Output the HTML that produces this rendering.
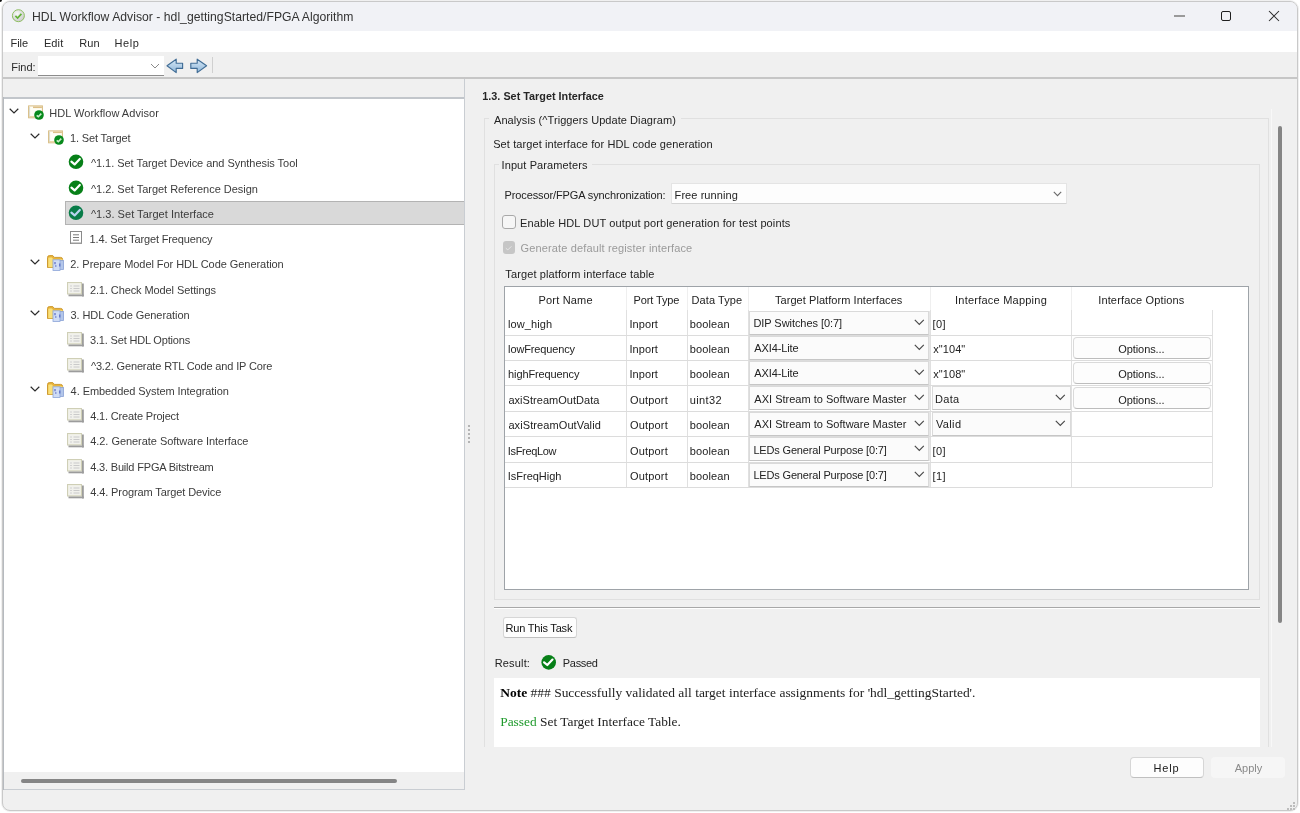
<!DOCTYPE html>
<html><head><meta charset="utf-8"><title>HDL Workflow Advisor</title>
<style>
html,body{margin:0;padding:0;width:1300px;height:813px;overflow:hidden;background:#fff;}
body{position:relative;font-family:'Liberation Sans',sans-serif;}
.t{position:absolute;white-space:nowrap;line-height:14px;font-family:'Liberation Sans',sans-serif;}
svg{overflow:visible}
</style></head><body>
<div style="position:absolute;left:0;top:0;width:1300px;height:813px;will-change:transform">
<div style="position:absolute;box-sizing:border-box;left:2px;top:1px;width:1296px;height:810px;border:1px solid #c9c9c9;border-radius:8px;background:#f0f0f0;overflow:hidden;box-shadow:0 0 0 1px #f0f0f0"></div><div style="position:absolute;box-sizing:border-box;left:3px;top:2px;width:1294px;height:29px;background:#f1f2f6;border-radius:7px 7px 0 0"></div><svg style="position:absolute;left:11px;top:9px" width="15" height="15" viewBox="0 0 15 15"><defs><radialGradient id="gi" cx="40%" cy="35%" r="70%"><stop offset="0" stop-color="#fafafa"/><stop offset="1" stop-color="#c8c8c8"/></radialGradient></defs><circle cx="7.4" cy="6.7" r="6" fill="url(#gi)" stroke="#8fbf62" stroke-width="1"/><path d="M4.4 6.9 L6.6 9 L10.4 4.9" stroke="#62b236" stroke-width="1.7" fill="none"/></svg><div class="t" style="top:10px;font-size:12.2px;color:#333;letter-spacing:0.018px;left:32.00px;">HDL Workflow Advisor - hdl_gettingStarted/FPGA Algorithm</div><div style="position:absolute;box-sizing:border-box;left:1174px;top:15.4px;width:11px;height:1.6px;background:#9a9a9a"></div><div style="position:absolute;box-sizing:border-box;left:1221px;top:11px;width:10px;height:10px;border:1.2px solid #1f1f1f;border-radius:2px"></div><svg style="position:absolute;left:1268px;top:10px" width="12" height="12" viewBox="0 0 12 12"><path d="M1 1 L11 11 M11 1 L1 11" stroke="#2b2b2b" stroke-width="1.05"/></svg><div style="position:absolute;box-sizing:border-box;left:3px;top:31px;width:1294px;height:21px;background:#fff"></div><div class="t" style="top:36px;font-size:11px;color:#2a2a2a;letter-spacing:-0.067px;left:10.60px;">File</div><div class="t" style="top:36px;font-size:11px;color:#2a2a2a;letter-spacing:0.133px;left:43.90px;">Edit</div><div class="t" style="top:36px;font-size:11px;color:#2a2a2a;letter-spacing:0.100px;left:79.30px;">Run</div><div class="t" style="top:36px;font-size:11px;color:#2a2a2a;letter-spacing:0.600px;left:114.40px;">Help</div><div style="position:absolute;box-sizing:border-box;left:3px;top:52px;width:1294px;height:25px;background:#f0f0f0"></div><div class="t" style="top:60px;font-size:11px;color:#2a2a2a;letter-spacing:-0.025px;left:11.20px;">Find:</div><div style="position:absolute;box-sizing:border-box;left:38px;top:56px;width:126px;height:20px;background:#fff;border-bottom:1px solid #8c8c8c"></div><svg style="position:absolute;left:150px;top:63px" width="10" height="6" viewBox="0 0 10 6"><path d="M1 1 L5 5 L9 1" stroke="#8a8a8a" stroke-width="1" fill="none"/></svg><svg style="position:absolute;left:166px;top:58px" width="18" height="16" viewBox="0 0 18 16"><defs><linearGradient id="ag" x1="0" y1="0" x2="0" y2="1"><stop offset="0" stop-color="#d6e8f7"/><stop offset="1" stop-color="#8fb6d8"/></linearGradient></defs><path d="M1 7.8 L10.2 1.2 L10.2 5.2 L16.6 5.2 L16.6 10.4 L10.2 10.4 L10.2 14.6 Z" fill="url(#ag)" stroke="#416d96" stroke-width="1.15" stroke-linejoin="round"/></svg><svg style="position:absolute;left:189px;top:58px" width="19" height="16" viewBox="0 0 19 16"><path d="M17.6 7.8 L8.2 1.2 L8.2 5.2 L1.8 5.2 L1.8 10.4 L8.2 10.4 L8.2 14.6 Z" fill="url(#ag)" stroke="#416d96" stroke-width="1.15" stroke-linejoin="round"/></svg><div style="position:absolute;box-sizing:border-box;left:212px;top:57px;width:1px;height:16px;background:#d0d0d0"></div><div style="position:absolute;box-sizing:border-box;left:3px;top:77px;width:1294px;height:2px;background:#c6c6c6"></div><div style="position:absolute;box-sizing:border-box;left:3px;top:79px;width:462px;height:711px;background:#f0f0f0;border-right:1px solid #c9cdd2;border-bottom:1px solid #c9cdd2"></div><div style="position:absolute;box-sizing:border-box;left:3px;top:97px;width:1px;height:693px;background:#b6babf"></div><div style="position:absolute;box-sizing:border-box;left:4px;top:97px;width:460px;height:2px;background:#c2c6cb"></div><div style="position:absolute;box-sizing:border-box;left:4px;top:99px;width:460px;height:673px;background:#fff"></div><div style="position:absolute;box-sizing:border-box;left:21px;top:779px;width:376px;height:4px;background:#858585;border-radius:2px"></div><svg style="position:absolute;left:9px;top:108px" width="10" height="6" viewBox="0 0 10 6"><path d="M0.7 0.8 L5 5 L9.3 0.8" stroke="#2b2b2b" stroke-width="1.2" fill="none"/></svg><svg style="position:absolute;left:28px;top:105px" width="16" height="16" viewBox="0 0 16 16"><rect x="0.6" y="0.9" width="13.8" height="11.9" fill="#fffef5" stroke="#d7bb80" stroke-width="1"/><path d="M5 2.3 L13.9 2.3" stroke="#dcbf86" stroke-width="1.6"/><path d="M1.6 2 L1.6 12" stroke="#d2d2c4" stroke-width="0.8"/><path d="M1.5 11.7 L8 11.7" stroke="#e8cf98" stroke-width="1"/><circle cx="11" cy="10" r="4.8" fill="#078a1c"/><path d="M8.7 10.3 L10.3 11.7 L13.3 8.6" stroke="#c9ecc9" stroke-width="1.6" fill="none"/></svg><div class="t" style="top:106px;font-size:11px;color:#3c3c3c;letter-spacing:0.042px;left:49.20px;">HDL Workflow Advisor</div><svg style="position:absolute;left:30px;top:133px" width="10" height="6" viewBox="0 0 10 6"><path d="M0.7 0.8 L5 5 L9.3 0.8" stroke="#2b2b2b" stroke-width="1.2" fill="none"/></svg><svg style="position:absolute;left:48px;top:130px" width="16" height="16" viewBox="0 0 16 16"><rect x="0.6" y="0.9" width="13.8" height="11.9" fill="#fffef5" stroke="#d7bb80" stroke-width="1"/><path d="M5 2.3 L13.9 2.3" stroke="#dcbf86" stroke-width="1.6"/><path d="M1.6 2 L1.6 12" stroke="#d2d2c4" stroke-width="0.8"/><path d="M1.5 11.7 L8 11.7" stroke="#e8cf98" stroke-width="1"/><circle cx="11" cy="10" r="4.8" fill="#078a1c"/><path d="M8.7 10.3 L10.3 11.7 L13.3 8.6" stroke="#c9ecc9" stroke-width="1.6" fill="none"/></svg><div class="t" style="top:131px;font-size:11px;color:#3c3c3c;letter-spacing:-0.142px;left:70.00px;">1. Set Target</div><svg style="position:absolute;left:68px;top:154px" width="16" height="16" viewBox="0 0 16 16"><circle cx="8" cy="7.8" r="7.3" fill="#078018"/><path d="M3.4000000000000004 7.7 L6.6 10.4 L11.8 5.0" stroke="#fff" stroke-width="2.2" fill="none" stroke-linecap="round" stroke-linejoin="round"/></svg><div class="t" style="top:156px;font-size:11px;color:#3c3c3c;letter-spacing:-0.039px;left:90.90px;">^1.1. Set Target Device and Synthesis Tool</div><svg style="position:absolute;left:68px;top:180px" width="16" height="16" viewBox="0 0 16 16"><circle cx="8" cy="7.8" r="7.3" fill="#078018"/><path d="M3.4000000000000004 7.7 L6.6 10.4 L11.8 5.0" stroke="#fff" stroke-width="2.2" fill="none" stroke-linecap="round" stroke-linejoin="round"/></svg><div class="t" style="top:182px;font-size:11px;color:#3c3c3c;letter-spacing:-0.016px;left:90.90px;">^1.2. Set Target Reference Design</div><div style="position:absolute;box-sizing:border-box;left:65px;top:201px;width:399px;height:24px;background:#d9d9d9;border:1px solid #b3b3b3;border-right:none"></div><svg style="position:absolute;left:68px;top:205px" width="16" height="16" viewBox="0 0 16 16"><circle cx="8" cy="7.8" r="7.3" fill="#087c48"/><path d="M3.4000000000000004 7.7 L6.6 10.4 L11.8 5.0" stroke="#b8d4f0" stroke-width="2.2" fill="none" stroke-linecap="round" stroke-linejoin="round"/></svg><div class="t" style="top:207px;font-size:11px;color:#3c3c3c;letter-spacing:0.028px;left:90.90px;">^1.3. Set Target Interface</div><svg style="position:absolute;left:70px;top:231px" width="13" height="14" viewBox="0 0 13 14"><rect x="0.5" y="0.5" width="11" height="12" fill="#fff" stroke="#8a8a8a" stroke-width="1"/><rect x="1" y="11.5" width="11" height="1.5" fill="#9a9a9a"/><path d="M3 3.8 h6 M3 6.5 h6 M3 9.2 h6" stroke="#7a7a7a" stroke-width="1"/></svg><div class="t" style="top:232px;font-size:11px;color:#3c3c3c;letter-spacing:-0.142px;left:89.60px;">1.4. Set Target Frequency</div><svg style="position:absolute;left:30px;top:259px" width="10" height="6" viewBox="0 0 10 6"><path d="M0.7 0.8 L5 5 L9.3 0.8" stroke="#2b2b2b" stroke-width="1.2" fill="none"/></svg><svg style="position:absolute;left:47px;top:255px" width="17" height="17" viewBox="0 0 17 17"><path d="M0.5 12.5 L0.5 2.5 Q0.5 0.6 2.4 0.6 L5.8 0.6 L7.4 2.4 L13.6 2.4 Q15.6 2.4 15.6 4.4 L15.6 12.5 Z" fill="#e8b43c" stroke="#c99426" stroke-width="0.9"/><path d="M1.3 12.3 L1.3 3.6 Q1.3 2.6 2.6 2.6 L4.8 2.6 L5.8 3.6 L5.8 12.3 Z" fill="#f9e07a"/><rect x="6" y="4" width="9.4" height="3" fill="#f6d466"/><rect x="11.5" y="5.5" width="5" height="9" fill="#b3c6ea" stroke="#8aa2d6" stroke-width="0.8"/><rect x="6" y="4.8" width="7" height="10.7" fill="#cfdcf4" stroke="#8ca5d9" stroke-width="0.8"/><path d="M8 7 v2.2 M8 11 h1.5 M12.8 8.5 v3" stroke="#4f5fc0" stroke-width="1.1"/></svg><div class="t" style="top:257px;font-size:11px;color:#3c3c3c;letter-spacing:-0.051px;left:70.30px;">2. Prepare Model For HDL Code Generation</div><svg style="position:absolute;left:67px;top:282px" width="17" height="15" viewBox="0 0 17 15"><rect x="0.5" y="0.5" width="14" height="11.5" fill="#ececdf" stroke="#cfcfb6" stroke-width="1"/><rect x="1.5" y="1.5" width="12" height="9.5" fill="#f1f1ec"/><rect x="15" y="1.5" width="1.8" height="13" fill="#9c9c9c"/><rect x="1.5" y="12.5" width="15.3" height="1.8" fill="#9c9c9c"/><path d="M3 4 h2 M3 6.5 h2 M3 9 h2" stroke="#d2d2d2" stroke-width="1.2"/><path d="M6.5 4 h6 M6.5 6.5 h6 M6.5 9 h6" stroke="#cacaca" stroke-width="1.2"/></svg><div class="t" style="top:283px;font-size:11px;color:#3c3c3c;letter-spacing:-0.096px;left:89.90px;">2.1. Check Model Settings</div><svg style="position:absolute;left:30px;top:310px" width="10" height="6" viewBox="0 0 10 6"><path d="M0.7 0.8 L5 5 L9.3 0.8" stroke="#2b2b2b" stroke-width="1.2" fill="none"/></svg><svg style="position:absolute;left:47px;top:306px" width="17" height="17" viewBox="0 0 17 17"><path d="M0.5 12.5 L0.5 2.5 Q0.5 0.6 2.4 0.6 L5.8 0.6 L7.4 2.4 L13.6 2.4 Q15.6 2.4 15.6 4.4 L15.6 12.5 Z" fill="#e8b43c" stroke="#c99426" stroke-width="0.9"/><path d="M1.3 12.3 L1.3 3.6 Q1.3 2.6 2.6 2.6 L4.8 2.6 L5.8 3.6 L5.8 12.3 Z" fill="#f9e07a"/><rect x="6" y="4" width="9.4" height="3" fill="#f6d466"/><rect x="11.5" y="5.5" width="5" height="9" fill="#b3c6ea" stroke="#8aa2d6" stroke-width="0.8"/><rect x="6" y="4.8" width="7" height="10.7" fill="#cfdcf4" stroke="#8ca5d9" stroke-width="0.8"/><path d="M8 7 v2.2 M8 11 h1.5 M12.8 8.5 v3" stroke="#4f5fc0" stroke-width="1.1"/></svg><div class="t" style="top:308px;font-size:11px;color:#3c3c3c;letter-spacing:-0.071px;left:70.40px;">3. HDL Code Generation</div><svg style="position:absolute;left:67px;top:332px" width="17" height="15" viewBox="0 0 17 15"><rect x="0.5" y="0.5" width="14" height="11.5" fill="#ececdf" stroke="#cfcfb6" stroke-width="1"/><rect x="1.5" y="1.5" width="12" height="9.5" fill="#f1f1ec"/><rect x="15" y="1.5" width="1.8" height="13" fill="#9c9c9c"/><rect x="1.5" y="12.5" width="15.3" height="1.8" fill="#9c9c9c"/><path d="M3 4 h2 M3 6.5 h2 M3 9 h2" stroke="#d2d2d2" stroke-width="1.2"/><path d="M6.5 4 h6 M6.5 6.5 h6 M6.5 9 h6" stroke="#cacaca" stroke-width="1.2"/></svg><div class="t" style="top:333px;font-size:11px;color:#3c3c3c;letter-spacing:-0.174px;left:90.00px;">3.1. Set HDL Options</div><svg style="position:absolute;left:67px;top:358px" width="17" height="15" viewBox="0 0 17 15"><rect x="0.5" y="0.5" width="14" height="11.5" fill="#ececdf" stroke="#cfcfb6" stroke-width="1"/><rect x="1.5" y="1.5" width="12" height="9.5" fill="#f1f1ec"/><rect x="15" y="1.5" width="1.8" height="13" fill="#9c9c9c"/><rect x="1.5" y="12.5" width="15.3" height="1.8" fill="#9c9c9c"/><path d="M3 4 h2 M3 6.5 h2 M3 9 h2" stroke="#d2d2d2" stroke-width="1.2"/><path d="M6.5 4 h6 M6.5 6.5 h6 M6.5 9 h6" stroke="#cacaca" stroke-width="1.2"/></svg><div class="t" style="top:359px;font-size:11px;color:#3c3c3c;letter-spacing:-0.150px;left:90.90px;">^3.2. Generate RTL Code and IP Core</div><svg style="position:absolute;left:30px;top:386px" width="10" height="6" viewBox="0 0 10 6"><path d="M0.7 0.8 L5 5 L9.3 0.8" stroke="#2b2b2b" stroke-width="1.2" fill="none"/></svg><svg style="position:absolute;left:47px;top:382px" width="17" height="17" viewBox="0 0 17 17"><path d="M0.5 12.5 L0.5 2.5 Q0.5 0.6 2.4 0.6 L5.8 0.6 L7.4 2.4 L13.6 2.4 Q15.6 2.4 15.6 4.4 L15.6 12.5 Z" fill="#e8b43c" stroke="#c99426" stroke-width="0.9"/><path d="M1.3 12.3 L1.3 3.6 Q1.3 2.6 2.6 2.6 L4.8 2.6 L5.8 3.6 L5.8 12.3 Z" fill="#f9e07a"/><rect x="6" y="4" width="9.4" height="3" fill="#f6d466"/><rect x="11.5" y="5.5" width="5" height="9" fill="#b3c6ea" stroke="#8aa2d6" stroke-width="0.8"/><rect x="6" y="4.8" width="7" height="10.7" fill="#cfdcf4" stroke="#8ca5d9" stroke-width="0.8"/><path d="M8 7 v2.2 M8 11 h1.5 M12.8 8.5 v3" stroke="#4f5fc0" stroke-width="1.1"/></svg><div class="t" style="top:384px;font-size:11px;color:#3c3c3c;letter-spacing:-0.066px;left:70.60px;">4. Embedded System Integration</div><svg style="position:absolute;left:67px;top:408px" width="17" height="15" viewBox="0 0 17 15"><rect x="0.5" y="0.5" width="14" height="11.5" fill="#ececdf" stroke="#cfcfb6" stroke-width="1"/><rect x="1.5" y="1.5" width="12" height="9.5" fill="#f1f1ec"/><rect x="15" y="1.5" width="1.8" height="13" fill="#9c9c9c"/><rect x="1.5" y="12.5" width="15.3" height="1.8" fill="#9c9c9c"/><path d="M3 4 h2 M3 6.5 h2 M3 9 h2" stroke="#d2d2d2" stroke-width="1.2"/><path d="M6.5 4 h6 M6.5 6.5 h6 M6.5 9 h6" stroke="#cacaca" stroke-width="1.2"/></svg><div class="t" style="top:409px;font-size:11px;color:#3c3c3c;letter-spacing:-0.161px;left:90.20px;">4.1. Create Project</div><svg style="position:absolute;left:67px;top:433px" width="17" height="15" viewBox="0 0 17 15"><rect x="0.5" y="0.5" width="14" height="11.5" fill="#ececdf" stroke="#cfcfb6" stroke-width="1"/><rect x="1.5" y="1.5" width="12" height="9.5" fill="#f1f1ec"/><rect x="15" y="1.5" width="1.8" height="13" fill="#9c9c9c"/><rect x="1.5" y="12.5" width="15.3" height="1.8" fill="#9c9c9c"/><path d="M3 4 h2 M3 6.5 h2 M3 9 h2" stroke="#d2d2d2" stroke-width="1.2"/><path d="M6.5 4 h6 M6.5 6.5 h6 M6.5 9 h6" stroke="#cacaca" stroke-width="1.2"/></svg><div class="t" style="top:434px;font-size:11px;color:#3c3c3c;letter-spacing:-0.042px;left:90.20px;">4.2. Generate Software Interface</div><svg style="position:absolute;left:67px;top:459px" width="17" height="15" viewBox="0 0 17 15"><rect x="0.5" y="0.5" width="14" height="11.5" fill="#ececdf" stroke="#cfcfb6" stroke-width="1"/><rect x="1.5" y="1.5" width="12" height="9.5" fill="#f1f1ec"/><rect x="15" y="1.5" width="1.8" height="13" fill="#9c9c9c"/><rect x="1.5" y="12.5" width="15.3" height="1.8" fill="#9c9c9c"/><path d="M3 4 h2 M3 6.5 h2 M3 9 h2" stroke="#d2d2d2" stroke-width="1.2"/><path d="M6.5 4 h6 M6.5 6.5 h6 M6.5 9 h6" stroke="#cacaca" stroke-width="1.2"/></svg><div class="t" style="top:460px;font-size:11px;color:#3c3c3c;letter-spacing:-0.175px;left:90.20px;">4.3. Build FPGA Bitstream</div><svg style="position:absolute;left:67px;top:484px" width="17" height="15" viewBox="0 0 17 15"><rect x="0.5" y="0.5" width="14" height="11.5" fill="#ececdf" stroke="#cfcfb6" stroke-width="1"/><rect x="1.5" y="1.5" width="12" height="9.5" fill="#f1f1ec"/><rect x="15" y="1.5" width="1.8" height="13" fill="#9c9c9c"/><rect x="1.5" y="12.5" width="15.3" height="1.8" fill="#9c9c9c"/><path d="M3 4 h2 M3 6.5 h2 M3 9 h2" stroke="#d2d2d2" stroke-width="1.2"/><path d="M6.5 4 h6 M6.5 6.5 h6 M6.5 9 h6" stroke="#cacaca" stroke-width="1.2"/></svg><div class="t" style="top:485px;font-size:11px;color:#3c3c3c;letter-spacing:-0.100px;left:90.20px;">4.4. Program Target Device</div><div style="position:absolute;box-sizing:border-box;left:468px;top:425.0px;width:2px;height:2px;background:#a0a0a0;border-radius:1px"></div><div style="position:absolute;box-sizing:border-box;left:468px;top:429.1px;width:2px;height:2px;background:#a0a0a0;border-radius:1px"></div><div style="position:absolute;box-sizing:border-box;left:468px;top:433.2px;width:2px;height:2px;background:#a0a0a0;border-radius:1px"></div><div style="position:absolute;box-sizing:border-box;left:468px;top:437.3px;width:2px;height:2px;background:#a0a0a0;border-radius:1px"></div><div style="position:absolute;box-sizing:border-box;left:468px;top:441.4px;width:2px;height:2px;background:#a0a0a0;border-radius:1px"></div><div class="t" style="top:89px;font-size:10.8px;color:#262626;font-weight:bold;letter-spacing:0.017px;left:482.30px;">1.3. Set Target Interface</div><div style="position:absolute;box-sizing:border-box;left:484px;top:118px;width:785px;height:629px;border:1px solid #e0e0e0;border-bottom:none"></div><div style="position:absolute;box-sizing:border-box;left:489px;top:112px;width:192px;height:14px;background:#f0f0f0"></div><div class="t" style="top:113px;font-size:11px;color:#222;letter-spacing:0.065px;left:494.00px;">Analysis (^Triggers Update Diagram)</div><div style="position:absolute;box-sizing:border-box;left:1271px;top:109px;width:1px;height:638px;background:#f8f8f8"></div><div class="t" style="top:137px;font-size:11px;color:#222;letter-spacing:0.093px;left:493.20px;">Set target interface for HDL code generation</div><div style="position:absolute;box-sizing:border-box;left:494px;top:164px;width:766px;height:436px;border:1px solid #e0e0e0"></div><div style="position:absolute;box-sizing:border-box;left:499px;top:158px;width:93px;height:14px;background:#f0f0f0"></div><div class="t" style="top:158px;font-size:11px;color:#222;letter-spacing:0.107px;left:501.50px;">Input Parameters</div><div class="t" style="top:188px;font-size:11px;color:#222;letter-spacing:-0.120px;left:504.60px;">Processor/FPGA synchronization:</div><div style="position:absolute;box-sizing:border-box;left:671px;top:183px;width:396px;height:21px;background:#fdfdfd;border:1px solid #e4e4e4;border-bottom-color:#d4d4d4;border-radius:1px"></div><div class="t" style="top:188px;font-size:11px;color:#222;letter-spacing:0.073px;left:674.60px;">Free running</div><svg style="position:absolute;left:1053px;top:191px" width="9" height="6" viewBox="0 0 9 6"><path d="M0.8 0.8 L4.5 4.6 L8.2 0.8" stroke="#6a6a6a" stroke-width="1.1" fill="none"/></svg><div style="position:absolute;box-sizing:border-box;left:502px;top:215px;width:14px;height:14px;background:#f6f6f6;border:1px solid #a9a9a9;border-radius:3px"></div><div class="t" style="top:216px;font-size:11px;color:#222;letter-spacing:0.117px;left:520.10px;">Enable HDL DUT output port generation for test points</div><div style="position:absolute;box-sizing:border-box;left:502.5px;top:241px;width:12.5px;height:13px;background:#c6c6c6;border-radius:3px"></div><svg style="position:absolute;left:502px;top:241px" width="13" height="13" viewBox="0 0 13 13"><path d="M3.8 7.2 L5.8 8.9 L9.4 5.3" stroke="#e6e6e6" stroke-width="1" fill="none"/></svg><div class="t" style="top:241px;font-size:11px;color:#9a9a9a;letter-spacing:0.141px;left:520.50px;">Generate default register interface</div><div class="t" style="top:267px;font-size:11px;color:#222;letter-spacing:0.117px;left:505.30px;">Target platform interface table</div><div style="position:absolute;box-sizing:border-box;left:504px;top:286px;width:745px;height:304px;background:#fff;border:1px solid #9ea3a8;box-sizing:border-box"></div><div class="t" style="top:293px;font-size:11px;color:#222;letter-spacing:0.188px;left:538.50px;">Port Name</div><div class="t" style="top:293px;font-size:11px;color:#222;letter-spacing:-0.100px;left:633.40px;">Port Type</div><div class="t" style="top:293px;font-size:11px;color:#222;letter-spacing:0.075px;left:691.60px;">Data Type</div><div class="t" style="top:293px;font-size:11px;color:#222;letter-spacing:0.056px;left:775.00px;">Target Platform Interfaces</div><div class="t" style="top:293px;font-size:11px;color:#222;letter-spacing:0.231px;left:955.00px;">Interface Mapping</div><div class="t" style="top:293px;font-size:11px;color:#222;letter-spacing:0.150px;left:1098.20px;">Interface Options</div><div style="position:absolute;box-sizing:border-box;left:626px;top:287px;width:1px;height:23px;background:#efefef"></div><div style="position:absolute;box-sizing:border-box;left:626px;top:310px;width:1px;height:177px;background:#e0e0e0"></div><div style="position:absolute;box-sizing:border-box;left:687px;top:287px;width:1px;height:23px;background:#efefef"></div><div style="position:absolute;box-sizing:border-box;left:687px;top:310px;width:1px;height:177px;background:#e0e0e0"></div><div style="position:absolute;box-sizing:border-box;left:748px;top:287px;width:1px;height:23px;background:#efefef"></div><div style="position:absolute;box-sizing:border-box;left:748px;top:310px;width:1px;height:177px;background:#e0e0e0"></div><div style="position:absolute;box-sizing:border-box;left:930px;top:287px;width:1px;height:23px;background:#efefef"></div><div style="position:absolute;box-sizing:border-box;left:930px;top:310px;width:1px;height:177px;background:#e0e0e0"></div><div style="position:absolute;box-sizing:border-box;left:1071px;top:287px;width:1px;height:23px;background:#efefef"></div><div style="position:absolute;box-sizing:border-box;left:1071px;top:310px;width:1px;height:177px;background:#e0e0e0"></div><div style="position:absolute;box-sizing:border-box;left:1212px;top:310px;width:1px;height:177px;background:#e0e0e0"></div><div style="position:absolute;box-sizing:border-box;left:505px;top:335px;width:707px;height:1px;background:#dcdcdc"></div><div class="t" style="top:317px;font-size:11px;color:#222;letter-spacing:0.071px;left:508.10px;">low_high</div><div class="t" style="top:317px;font-size:11px;color:#222;letter-spacing:0.060px;left:629.50px;">Inport</div><div class="t" style="top:317px;font-size:11px;color:#222;letter-spacing:0.117px;left:689.70px;">boolean</div><div style="position:absolute;box-sizing:border-box;left:749px;top:311px;width:180px;height:24px;background:#fbfbfb;border:1px solid #dadada;border-bottom-color:#c6c6c6"></div><div style="position:absolute;box-sizing:border-box;left:929px;top:311px;width:1px;height:24px;background:#e6e6e6"></div><div class="t" style="top:316px;font-size:11px;color:#222;letter-spacing:-0.059px;left:753.40px;">DIP Switches [0:7]</div><svg style="position:absolute;left:914px;top:319px" width="11" height="7" viewBox="0 0 11 7"><path d="M0.8 0.8 L5.3 5.5 L9.8 0.8" stroke="#4a4a4a" stroke-width="1.15" fill="none"/></svg><div class="t" style="top:317px;font-size:11px;color:#222;letter-spacing:0.400px;left:932.60px;">[0]</div><div style="position:absolute;box-sizing:border-box;left:505px;top:360px;width:707px;height:1px;background:#dcdcdc"></div><div class="t" style="top:342px;font-size:11px;color:#222;letter-spacing:-0.136px;left:508.10px;">lowFrequency</div><div class="t" style="top:342px;font-size:11px;color:#222;letter-spacing:0.060px;left:629.50px;">Inport</div><div class="t" style="top:342px;font-size:11px;color:#222;letter-spacing:0.117px;left:689.70px;">boolean</div><div style="position:absolute;box-sizing:border-box;left:749px;top:336px;width:180px;height:24px;background:#fbfbfb;border:1px solid #dadada;border-bottom-color:#c6c6c6"></div><div style="position:absolute;box-sizing:border-box;left:929px;top:336px;width:1px;height:24px;background:#e6e6e6"></div><div class="t" style="top:341px;font-size:11px;color:#222;letter-spacing:-0.112px;left:754.30px;">AXI4-Lite</div><svg style="position:absolute;left:914px;top:344px" width="11" height="7" viewBox="0 0 11 7"><path d="M0.8 0.8 L5.3 5.5 L9.8 0.8" stroke="#4a4a4a" stroke-width="1.15" fill="none"/></svg><div class="t" style="top:342px;font-size:11px;color:#222;letter-spacing:0.060px;left:933.30px;">x&quot;104&quot;</div><div style="position:absolute;box-sizing:border-box;left:1073px;top:337px;width:138px;height:22px;background:#fdfdfd;border:1px solid #dadada;border-bottom-color:#bdbdbd;border-radius:4px"></div><div class="t" style="top:342px;font-size:11px;color:#222;letter-spacing:-0.089px;left:1118.30px;">Options...</div><div style="position:absolute;box-sizing:border-box;left:505px;top:385px;width:707px;height:1px;background:#dcdcdc"></div><div class="t" style="top:367px;font-size:11px;color:#222;letter-spacing:-0.117px;left:508.10px;">highFrequency</div><div class="t" style="top:367px;font-size:11px;color:#222;letter-spacing:0.060px;left:629.50px;">Inport</div><div class="t" style="top:367px;font-size:11px;color:#222;letter-spacing:0.117px;left:689.70px;">boolean</div><div style="position:absolute;box-sizing:border-box;left:749px;top:361px;width:180px;height:24px;background:#fbfbfb;border:1px solid #dadada;border-bottom-color:#c6c6c6"></div><div style="position:absolute;box-sizing:border-box;left:929px;top:361px;width:1px;height:24px;background:#e6e6e6"></div><div class="t" style="top:366px;font-size:11px;color:#222;letter-spacing:-0.112px;left:754.30px;">AXI4-Lite</div><svg style="position:absolute;left:914px;top:369px" width="11" height="7" viewBox="0 0 11 7"><path d="M0.8 0.8 L5.3 5.5 L9.8 0.8" stroke="#4a4a4a" stroke-width="1.15" fill="none"/></svg><div class="t" style="top:367px;font-size:11px;color:#222;letter-spacing:0.060px;left:933.30px;">x&quot;108&quot;</div><div style="position:absolute;box-sizing:border-box;left:1073px;top:362px;width:138px;height:22px;background:#fdfdfd;border:1px solid #dadada;border-bottom-color:#bdbdbd;border-radius:4px"></div><div class="t" style="top:367px;font-size:11px;color:#222;letter-spacing:-0.089px;left:1118.30px;">Options...</div><div style="position:absolute;box-sizing:border-box;left:505px;top:411px;width:707px;height:1px;background:#dcdcdc"></div><div class="t" style="top:393px;font-size:11px;color:#222;letter-spacing:0.040px;left:508.40px;">axiStreamOutData</div><div class="t" style="top:393px;font-size:11px;color:#222;letter-spacing:0.167px;left:630.00px;">Outport</div><div class="t" style="top:393px;font-size:11px;color:#222;letter-spacing:0.380px;left:689.70px;">uint32</div><div style="position:absolute;box-sizing:border-box;left:749px;top:386px;width:180px;height:24px;background:#fbfbfb;border:1px solid #dadada;border-bottom-color:#c6c6c6"></div><div style="position:absolute;box-sizing:border-box;left:929px;top:386px;width:1px;height:24px;background:#e6e6e6"></div><div class="t" style="top:392px;font-size:11px;color:#222;letter-spacing:0.014px;left:754.30px;">AXI Stream to Software Master</div><svg style="position:absolute;left:914px;top:394px" width="11" height="7" viewBox="0 0 11 7"><path d="M0.8 0.8 L5.3 5.5 L9.8 0.8" stroke="#4a4a4a" stroke-width="1.15" fill="none"/></svg><div style="position:absolute;box-sizing:border-box;left:932px;top:386px;width:139px;height:24px;background:#fbfbfb;border:1px solid #dadada;border-bottom-color:#c6c6c6"></div><div class="t" style="top:392px;font-size:11px;color:#222;letter-spacing:0.300px;left:935.10px;">Data</div><svg style="position:absolute;left:1055px;top:394px" width="11" height="7" viewBox="0 0 11 7"><path d="M0.8 0.8 L5.3 5.5 L9.8 0.8" stroke="#4a4a4a" stroke-width="1.15" fill="none"/></svg><div style="position:absolute;box-sizing:border-box;left:1073px;top:387px;width:138px;height:22px;background:#fdfdfd;border:1px solid #dadada;border-bottom-color:#bdbdbd;border-radius:4px"></div><div class="t" style="top:393px;font-size:11px;color:#222;letter-spacing:-0.089px;left:1118.30px;">Options...</div><div style="position:absolute;box-sizing:border-box;left:505px;top:436px;width:707px;height:1px;background:#dcdcdc"></div><div class="t" style="top:418px;font-size:11px;color:#222;letter-spacing:0.094px;left:508.40px;">axiStreamOutValid</div><div class="t" style="top:418px;font-size:11px;color:#222;letter-spacing:0.167px;left:630.00px;">Outport</div><div class="t" style="top:418px;font-size:11px;color:#222;letter-spacing:0.117px;left:689.70px;">boolean</div><div style="position:absolute;box-sizing:border-box;left:749px;top:412px;width:180px;height:24px;background:#fbfbfb;border:1px solid #dadada;border-bottom-color:#c6c6c6"></div><div style="position:absolute;box-sizing:border-box;left:929px;top:412px;width:1px;height:24px;background:#e6e6e6"></div><div class="t" style="top:417px;font-size:11px;color:#222;letter-spacing:0.014px;left:754.30px;">AXI Stream to Software Master</div><svg style="position:absolute;left:914px;top:420px" width="11" height="7" viewBox="0 0 11 7"><path d="M0.8 0.8 L5.3 5.5 L9.8 0.8" stroke="#4a4a4a" stroke-width="1.15" fill="none"/></svg><div style="position:absolute;box-sizing:border-box;left:932px;top:412px;width:139px;height:24px;background:#fbfbfb;border:1px solid #dadada;border-bottom-color:#c6c6c6"></div><div class="t" style="top:417px;font-size:11px;color:#222;letter-spacing:0.375px;left:935.90px;">Valid</div><svg style="position:absolute;left:1055px;top:420px" width="11" height="7" viewBox="0 0 11 7"><path d="M0.8 0.8 L5.3 5.5 L9.8 0.8" stroke="#4a4a4a" stroke-width="1.15" fill="none"/></svg><div style="position:absolute;box-sizing:border-box;left:505px;top:462px;width:707px;height:1px;background:#dcdcdc"></div><div class="t" style="top:444px;font-size:11px;color:#222;letter-spacing:-0.325px;left:507.80px;">IsFreqLow</div><div class="t" style="top:444px;font-size:11px;color:#222;letter-spacing:0.167px;left:630.00px;">Outport</div><div class="t" style="top:444px;font-size:11px;color:#222;letter-spacing:0.117px;left:689.70px;">boolean</div><div style="position:absolute;box-sizing:border-box;left:749px;top:437px;width:180px;height:24px;background:#fbfbfb;border:1px solid #dadada;border-bottom-color:#c6c6c6"></div><div style="position:absolute;box-sizing:border-box;left:929px;top:437px;width:1px;height:24px;background:#e6e6e6"></div><div class="t" style="top:443px;font-size:11px;color:#222;letter-spacing:-0.164px;left:753.40px;">LEDs General Purpose [0:7]</div><svg style="position:absolute;left:914px;top:445px" width="11" height="7" viewBox="0 0 11 7"><path d="M0.8 0.8 L5.3 5.5 L9.8 0.8" stroke="#4a4a4a" stroke-width="1.15" fill="none"/></svg><div class="t" style="top:444px;font-size:11px;color:#222;letter-spacing:0.400px;left:932.60px;">[0]</div><div style="position:absolute;box-sizing:border-box;left:505px;top:487px;width:707px;height:1px;background:#dcdcdc"></div><div class="t" style="top:469px;font-size:11px;color:#222;letter-spacing:-0.022px;left:507.80px;">IsFreqHigh</div><div class="t" style="top:469px;font-size:11px;color:#222;letter-spacing:0.167px;left:630.00px;">Outport</div><div class="t" style="top:469px;font-size:11px;color:#222;letter-spacing:0.117px;left:689.70px;">boolean</div><div style="position:absolute;box-sizing:border-box;left:749px;top:463px;width:180px;height:24px;background:#fbfbfb;border:1px solid #dadada;border-bottom-color:#c6c6c6"></div><div style="position:absolute;box-sizing:border-box;left:929px;top:463px;width:1px;height:24px;background:#e6e6e6"></div><div class="t" style="top:468px;font-size:11px;color:#222;letter-spacing:-0.164px;left:753.40px;">LEDs General Purpose [0:7]</div><svg style="position:absolute;left:914px;top:471px" width="11" height="7" viewBox="0 0 11 7"><path d="M0.8 0.8 L5.3 5.5 L9.8 0.8" stroke="#4a4a4a" stroke-width="1.15" fill="none"/></svg><div class="t" style="top:469px;font-size:11px;color:#222;letter-spacing:0.400px;left:932.60px;">[1]</div><div style="position:absolute;box-sizing:border-box;left:494px;top:607px;width:766px;height:1px;background:#a8a8a8"></div><div style="position:absolute;box-sizing:border-box;left:494px;top:608px;width:766px;height:1px;background:#fff"></div><div style="position:absolute;box-sizing:border-box;left:503px;top:617px;width:74px;height:21px;background:#fdfdfd;border:1px solid #d6d6d6;border-bottom-color:#c0c0c0;border-radius:3px"></div><div class="t" style="top:621px;font-size:11px;color:#111;letter-spacing:-0.200px;left:505.50px;">Run This Task</div><div class="t" style="top:656px;font-size:11px;color:#222;letter-spacing:0.167px;left:494.70px;">Result:</div><svg style="position:absolute;left:541px;top:655px" width="16" height="16" viewBox="0 0 16 16"><circle cx="7.7" cy="7.4" r="7.3" fill="#078018"/><path d="M3.1000000000000005 7.300000000000001 L6.300000000000001 10.0 L11.5 4.6000000000000005" stroke="#fff" stroke-width="2.2" fill="none" stroke-linecap="round" stroke-linejoin="round"/></svg><div class="t" style="top:656px;font-size:11px;color:#222;letter-spacing:-0.300px;left:562.80px;">Passed</div><div style="position:absolute;box-sizing:border-box;left:494px;top:678px;width:766px;height:69px;background:#fff"></div><div class="t" style="top:686px;font-size:13.47px;color:#222;font-family:'Liberation Serif',serif;left:500.27px;"><b style="color:#000">Note</b> ### Successfully validated all target interface assignments for &#39;hdl_gettingStarted&#39;.</div><div class="t" style="top:715px;font-size:13.4px;color:#222;font-family:'Liberation Serif',serif;left:500.20px;"><span style="color:#1f9a2c">Passed</span> Set Target Interface Table.</div><div style="position:absolute;box-sizing:border-box;left:1130px;top:757px;width:74px;height:21px;background:#fdfdfd;border:1px solid #d6d6d6;border-bottom-color:#c0c0c0;border-radius:4px;box-sizing:border-box"></div><div class="t" style="top:761px;font-size:11px;color:#1a1a1a;letter-spacing:0.800px;left:1153.60px;">Help</div><div style="position:absolute;box-sizing:border-box;left:1211px;top:757px;width:74px;height:21px;background:#f6f6f6;border-radius:4px"></div><div class="t" style="top:761px;font-size:11px;color:#8a8a8a;left:1234.70px;">Apply</div><div style="position:absolute;box-sizing:border-box;left:1278px;top:126px;width:4px;height:497px;background:#858585;border-radius:2px"></div><div style="position:absolute;box-sizing:border-box;left:1293px;top:801.5px;width:2px;height:2px;background:#bdbdbd"></div><div style="position:absolute;box-sizing:border-box;left:1290px;top:804.5px;width:2px;height:2px;background:#bdbdbd"></div><div style="position:absolute;box-sizing:border-box;left:1293px;top:804.5px;width:2px;height:2px;background:#bdbdbd"></div><div style="position:absolute;box-sizing:border-box;left:1287px;top:807.5px;width:2px;height:2px;background:#bdbdbd"></div><div style="position:absolute;box-sizing:border-box;left:1290px;top:807.5px;width:2px;height:2px;background:#bdbdbd"></div><div style="position:absolute;box-sizing:border-box;left:1293px;top:807.5px;width:2px;height:2px;background:#bdbdbd"></div><div style="position:absolute;box-sizing:border-box;left:0px;top:0px;width:2px;height:2px;background:#111;border-radius:0 0 2px 0"></div>
</div>
</body></html>
